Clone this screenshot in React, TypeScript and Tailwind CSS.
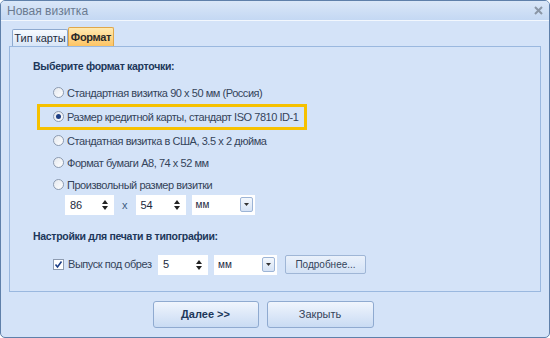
import React from "react";

const formats = [
  "Стандартная визитка 90 x 50 мм (Россия)",
  "Размер кредитной карты, стандарт ISO 7810 ID-1",
  "Стандатная визитка в США, 3.5 x 2 дюйма",
  "Формат бумаги A8, 74 x 52 мм",
  "Произвольный размер визитки",
];

function Radio({ checked }: { checked?: boolean }) {
  return (
    <span className="flex h-[11px] w-[11px] shrink-0 items-center justify-center rounded-full border border-[#8d9bb0] bg-gradient-to-br from-[#e4e8ee] to-[#ffffff]">
      {checked && <span className="h-[5px] w-[5px] rounded-full bg-[#1d3f86]" />}
    </span>
  );
}

function Spin({ value, width }: { value: string; width: string }) {
  return (
    <div className={`flex h-[20px] shrink-0 items-center justify-between bg-white pl-[5px] pr-[5px] ${width}`}>
      <span className="text-[11px] text-[#1b2a3e]">{value}</span>
      <svg width="8" height="12" viewBox="0 0 8 12">
        <path d="M4 1 L7 5 L1 5 Z" fill="#222" />
        <path d="M4 11 L7 7 L1 7 Z" fill="#222" />
      </svg>
    </div>
  );
}

function Combo({ value }: { value: string }) {
  return (
    <div className="flex h-[20px] w-[63px] shrink-0 items-center justify-between bg-white pl-[4px] pr-[2px]">
      <span className="text-[10px] text-[#1b2a3e]">{value}</span>
      <span className="flex h-[15px] w-[13px] items-center justify-center rounded-[2px] border border-[#9cb4d6] bg-gradient-to-b from-[#f4f8fd] to-[#d6e3f5]">
        <svg width="5" height="3" viewBox="0 0 5 3">
          <path d="M0 0 H5 L2.5 3 Z" fill="#333" />
        </svg>
      </span>
    </div>
  );
}

export default function App() {
  return (
    <div className="flex h-[338px] w-[550px] flex-col overflow-hidden whitespace-nowrap rounded-[5px] border border-[#5f80aa] bg-[#d4e3f8] font-['Liberation_Sans',sans-serif]">
      <div className="flex h-[20px] shrink-0 items-center justify-between border-b border-[#f2f7fd] bg-gradient-to-b from-[#dae7f8] to-[#c4d8f3] pl-[6px] pr-[6px]">
        <span className="text-[12px] text-[#6a7a90]">Новая визитка</span>
        <svg width="9" height="9" viewBox="0 0 9 9">
          <path d="M1 1 L8 8 M8 1 L1 8" stroke="#8a96a6" strokeWidth="2" />
        </svg>
      </div>

      <div className="flex flex-col px-[8px] pt-[6px]">
        <div className="flex items-end pl-[3px]">
          <div className="flex h-[17px] w-[56px] items-center justify-center rounded-t-[2px] border border-b-0 border-[#8eaad0] bg-gradient-to-b from-[#f7fafe] to-[#d7e5f7] text-[11px] text-[#1f2d40]">
            Тип карты
          </div>
          <div className="flex h-[19px] w-[46px] items-center justify-center rounded-t-[2px] border border-b-0 border-[#e0a74a] bg-gradient-to-b from-[#ffeab0] to-[#fdc463] text-[11px] font-bold tracking-[-0.3px] text-[#2a2a2a]">
            Формат
          </div>
        </div>

        <div className="flex h-[246px] flex-col border border-[#9ab8df] pl-[23px] pt-[12px]">
          <div className="text-[10.5px] font-bold tracking-[-0.3px] text-[#20375a]">Выберите формат карточки:</div>

          <div className="mt-[7px] flex flex-col">
            {formats.map((f, i) => (
              <div
                key={i}
                className={
                  i === 1
                    ? "ml-[4px] flex h-[26px] w-[270px] items-center gap-[3px] border-[3px] border-[#f6c100] pl-[13px]"
                    : "flex h-[22px] items-center gap-[3px] pl-[20px]"
                }
              >
                <Radio checked={i === 1} />
                <span className="text-[11px] tracking-[-0.45px] text-[#34445a]">{f}</span>
              </div>
            ))}
          </div>

          <div className="mt-[-1px] flex items-center pl-[32px]">
            <Spin value="86" width="w-[49px]" />
            <span className="mx-[8px] text-[11px] text-[#3d5a80]">x</span>
            <Spin value="54" width="w-[50px]" />
            <div className="ml-[6px]">
              <Combo value="мм" />
            </div>
          </div>

          <div className="mt-[14px] text-[10.5px] font-bold tracking-[-0.3px] text-[#20375a]">
            Настройки для печати в типографии:
          </div>

          <div className="mt-[10px] flex items-center pl-[20px]">
            <span className="flex h-[11px] w-[11px] shrink-0 items-center justify-center border border-[#8d9bb0] bg-white">
              <svg width="9" height="9" viewBox="0 0 9 9">
                <path d="M1.5 4.5 L3.5 7 L7.5 1.5" stroke="#1d3f86" strokeWidth="1.6" fill="none" />
              </svg>
            </span>
            <span className="ml-[4px] w-[90px] text-[11px] tracking-[-0.45px] text-[#34445a]">Выпуск под обрез</span>
            <Spin value="5" width="w-[50px]" />
            <div className="ml-[6px]">
              <Combo value="мм" />
            </div>
            <button className="ml-[8px] flex h-[19px] w-[81px] items-center justify-center rounded-[2px] border border-[#9fb6d6] bg-gradient-to-b from-[#eaf1fb] to-[#d3e2f6] text-[10px] text-[#34445a]">
              Подробнее...
            </button>
          </div>
        </div>

        <div className="mt-[9px] flex justify-center gap-[8px] pr-[24px]">
          <button className="flex h-[27px] w-[106px] items-center justify-center rounded-[3px] border border-[#8faad0] bg-gradient-to-b from-[#f0f5fd] to-[#c9dbf3] text-[11px] font-bold text-[#20375a]">
            Далее &gt;&gt;
          </button>
          <button className="flex h-[27px] w-[107px] items-center justify-center rounded-[3px] border border-[#8faad0] bg-gradient-to-b from-[#f0f5fd] to-[#c9dbf3] text-[11px] text-[#34445a]">
            Закрыть
          </button>
        </div>
      </div>
    </div>
  );
}
